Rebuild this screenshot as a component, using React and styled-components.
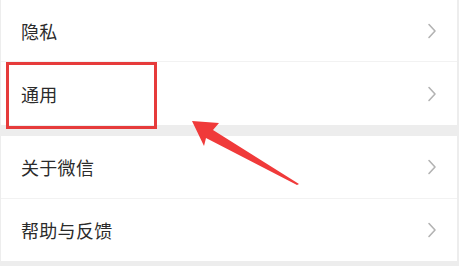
import React from "react";
import styled, { createGlobalStyle } from "styled-components";

const Global = createGlobalStyle`
  html, body { margin: 0; padding: 0; background: #ffffff; }
  body { font-family: "Noto Sans CJK SC", "Noto Sans", sans-serif; }
`;

const Page = styled.div`
  position: relative;
  width: 459px;
  height: 266px;
  background: #ededed;
  display: flex;
  flex-direction: column;
  padding: 0 2px 0 1px;
  box-sizing: border-box;
  overflow: hidden;
`;

const Group = styled.div`
  background: #ffffff;
  display: flex;
  flex-direction: column;
  margin-bottom: ${(p) => p.$gap}px;
`;

const Row = styled.div`
  height: ${(p) => p.$h}px;
  display: flex;
  align-items: center;
  justify-content: space-between;
  padding: 0 20px 0 20px;
  position: relative;
  box-sizing: border-box;
  border-bottom: ${(p) => (p.$divider ? "1px solid #f2f2f2" : "none")};
`;

const Label = styled.span`
  font-size: 18px;
  color: #2b2b2b;
  letter-spacing: 0.3px;
  line-height: 1;
`;

const Chevron = () => (
  <svg width="10" height="16" viewBox="0 0 10 16">
    <path d="M2 1.5 L8 8 L2 14.5" fill="none" stroke="#b3b3b3" strokeWidth="1.6" strokeLinecap="round" strokeLinejoin="round" />
  </svg>
);

const HighlightBox = styled.div`
  position: absolute;
  left: 6px;
  top: 62px;
  width: 151px;
  height: 67px;
  border: 3px solid #e63b3b;
  box-sizing: border-box;
  pointer-events: none;
`;

const ArrowLayer = styled.svg`
  position: absolute;
  left: 0;
  top: 0;
  pointer-events: none;
`;

const items = [
  { group: 0, label: "隐私", h: 62 },
  { group: 0, label: "通用", h: 63 },
  { group: 1, label: "关于微信", h: 63 },
  { group: 1, label: "帮助与反馈", h: 62 },
];

export default function App() {
  const groups = [items.filter((i) => i.group === 0), items.filter((i) => i.group === 1)];
  return (
    <>
      <Global />
      <Page>
        {groups.map((g, gi) => (
          <Group key={gi} $gap={gi === 0 ? 11 : 0}>
            {g.map((it, i) => (
              <Row key={it.label} $h={it.h} $divider={i < g.length - 1}>
                <Label>{it.label}</Label>
                <Chevron />
              </Row>
            ))}
          </Group>
        ))}
        <HighlightBox />
        <ArrowLayer width="459" height="266" viewBox="0 0 459 266">
          <polygon
            points="192,121 219,123 213,130 299,184 297,185 206,138 204,146"
            fill="#f03a3a"
          />
        </ArrowLayer>
      </Page>
    </>
  );
}
